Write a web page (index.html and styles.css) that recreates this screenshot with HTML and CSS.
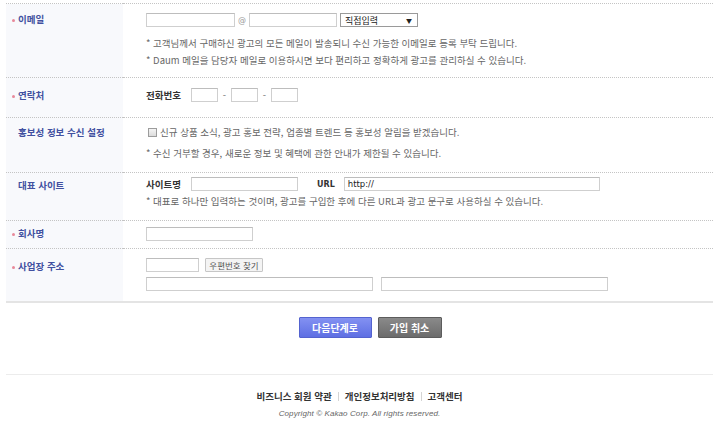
FILE: index.html
```html
<!DOCTYPE html>
<html lang="ko">
<head>
<meta charset="utf-8">
<title>회원가입</title>
<link rel="stylesheet" href="styles.css">
</head>
<body>
<div class="page">
  <table class="form">
    <tr class="row row-email">
      <th class="req">이메일</th>
      <td>
        <div class="fields">
          <span class="input w-email1"></span>
          <span class="at">@</span>
          <span class="input w-email2"></span>
          <span class="select"><span>직접입력</span><span class="arrow">▼</span></span>
        </div>
        <p class="note first">* 고객님께서 구매하신 광고의 모든 메일이 발송되니 수신 가능한 이메일로 등록 부탁 드립니다.</p>
        <p class="note">* Daum 메일을 담당자 메일로 이용하시면 보다 편리하고 정확하게 광고를 관리하실 수 있습니다.</p>
      </td>
    </tr>
    <tr class="row row-phone">
      <th class="req">연락처</th>
      <td>
        <div class="fields">
          <span class="flabel">전화번호</span>
          <span class="input w-phone"></span>
          <span class="dash">-</span>
          <span class="input w-phone"></span>
          <span class="dash">-</span>
          <span class="input w-phone"></span>
        </div>
      </td>
    </tr>
    <tr class="row row-promo">
      <th>홍보성 정보 수신 설정</th>
      <td>
        <label class="check"><span class="box"></span>신규 상품 소식, 광고 홍보 전략, 업종별 트렌드 등 홍보성 알림을 받겠습니다.</label>
        <p class="note gap">* 수신 거부할 경우, 새로운 정보 및 혜택에 관한 안내가 제한될 수 있습니다.</p>
      </td>
    </tr>
    <tr class="row row-site">
      <th>대표 사이트</th>
      <td>
        <div class="fields">
          <span class="flabel">사이트명</span>
          <span class="input w-site"></span>
          <span class="flabel url">URL</span>
          <span class="input w-url">http://</span>
        </div>
        <p class="note tight">* 대표로 하나만 입력하는 것이며, 광고를 구입한 후에 다른 URL과 광고 문구로 사용하실 수 있습니다.</p>
      </td>
    </tr>
    <tr class="row row-company">
      <th class="req">회사명</th>
      <td>
        <div class="fields">
          <span class="input w-company"></span>
        </div>
      </td>
    </tr>
    <tr class="row row-addr">
      <th class="req">사업장 주소</th>
      <td>
        <div class="fields">
          <span class="input w-zip"></span>
          <span class="zipbtn">우편번호 찾기</span>
        </div>
        <div class="fields second">
          <span class="input w-addr"></span>
          <span class="input w-addr"></span>
        </div>
      </td>
    </tr>
  </table>

  <div class="actions">
    <span class="btn btn-next">다음단계로</span>
    <span class="btn btn-cancel">가입 취소</span>
  </div>

  <div class="footer">
    <div class="links">
      <a>비즈니스 회원 약관</a><span class="sep"></span><a>개인정보처리방침</a><span class="sep"></span><a>고객센터</a>
    </div>
    <p class="copy">Copyright © Kakao Corp. All rights reserved.</p>
  </div>
</div>
</body>
</html>
```
FILE: styles.css
```css
* { box-sizing: border-box; }
html, body { margin: 0; padding: 0; background: #fff; }
body {
  font-family: "Noto Sans CJK KR", "Noto Sans", sans-serif;
  font-size: 9.5px;
  color: #555;
}
.page { padding: 3px 7px 0 6px; }

.form {
  width: 707px;
  border-collapse: collapse;
  table-layout: fixed;
}
.row { border-top: 1px dotted #c4c4c4; }
.row-addr { border-bottom: 2px solid #e4e4e4; }

.form th {
  width: 117px;
  padding: 0 0 0 12px;
  background: #f8f9fc;
  text-align: left;
  vertical-align: top;
  font-size: 9.5px;
  line-height: 14px;
  font-weight: bold;
  color: #4150a0;
  white-space: nowrap;
}
.form th.req::before {
  content: "";
  display: inline-block;
  width: 3px;
  height: 3px;
  border-radius: 50%;
  background: #e8899a;
  margin-left: -6px;
  margin-right: 3px;
  vertical-align: middle;
}
.form td {
  padding: 0 0 0 23px;
  vertical-align: top;
}

.row-email th { padding-top: 8px; }
.row-email td { padding-top: 9px; padding-bottom: 8px; }
.row-phone th { padding-top: 10px; }
.row-phone td { padding-top: 10px; padding-bottom: 15px; }
.row-promo th { padding-top: 7px; }
.row-promo td { padding-top: 6px; padding-bottom: 10px; }
.row-site th { padding-top: 5px; }
.row-site td { padding-top: 4px; padding-bottom: 10px; }
.row-company th { padding-top: 5px; }
.row-company td { padding-top: 6px; padding-bottom: 7px; }
.row-addr th { padding-top: 10px; }
.row-addr td { padding-top: 9px; padding-bottom: 10px; }

.fields {
  display: flex;
  align-items: center;
  height: 14px;
}
.fields.second { margin-top: 5px; gap: 8px; }

.input {
  display: inline-block;
  height: 14px;
  border: 1px solid #cfcfcf;
  border-top-color: #bdbdbd;
  background: #fff;
  padding: 0 3px;
  font-size: 8.5px;
  line-height: 12px;
  color: #222;
  font-family: "DejaVu Sans", sans-serif;
}
.w-email1 { width: 89px; }
.w-email2 { width: 88px; }
.w-phone { width: 27px; }
.w-site { width: 107px; }
.w-url { width: 256px; }
.w-company { width: 107px; }
.w-zip { width: 53px; }
.w-addr { width: 227px; }

.at { width: 14px; text-align: center; color: #999; font-size: 8px; font-family: "DejaVu Sans", sans-serif; }
.select {
  display: inline-flex;
  justify-content: space-between;
  align-items: center;
  width: 78px;
  height: 14px;
  margin-left: 3px;
  padding: 0 5px 0 4px;
  border: 1px solid #9a9a9a;
  background: #fff;
  color: #222;
  font-size: 9px;
}
.select .arrow { font-size: 6px; color: #222; }

.flabel { font-weight: bold; color: #333; font-size: 9.5px; width: 45px; flex: none; }
.flabel.url { width: auto; margin-left: 19px; margin-right: 9px; font-family: "DejaVu Sans", sans-serif; font-size: 8px; }
.dash { width: 13px; text-align: center; color: #777; }

.note {
  margin: 0;
  line-height: 17px;
  height: 17px;
  font-size: 9.5px;
  color: #666;
  white-space: nowrap;
}
.note.first { margin-top: 8px; }
.note.gap { margin-top: 4px; }
.note.tight { margin-top: 2px; }

.check {
  display: flex;
  align-items: center;
  height: 17px;
  line-height: 17px;
  color: #666;
  font-size: 9.5px;
  white-space: nowrap;
}
.check .box {
  display: inline-block;
  width: 9px;
  height: 9px;
  border: 1px solid #9c9c9c;
  background: linear-gradient(#f4f4f4, #dcdcdc);
  margin: 0 3px 0 2px;
}

.zipbtn {
  display: inline-flex;
  align-items: center;
  justify-content: center;
  width: 58px;
  height: 14px;
  margin-left: 6px;
  border: 1px solid #c6c6c6;
  background: #f4f4f4;
  font-size: 8.5px;
  color: #555;
  border-radius: 1px;
}

.actions {
  display: flex;
  justify-content: center;
  gap: 6px;
  padding-left: 21px;
  margin-top: 14px;
}
.btn {
  display: inline-flex;
  align-items: center;
  justify-content: center;
  height: 21px;
  font-size: 10px;
  font-weight: bold;
  color: #fff;
  border-radius: 1px;
}
.btn-next {
  width: 73px;
  background: linear-gradient(#8391f2, #5e6fe3);
  border: 1px solid #5463cf;
}
.btn-cancel {
  width: 64px;
  background: linear-gradient(#8a8a8a, #6c6c6c);
  border: 1px solid #5c5c5c;
}

.footer {
  margin-top: 36px;
  border-top: 1px solid #ececec;
  text-align: center;
  width: 707px;
}
.links {
  display: flex;
  justify-content: center;
  align-items: center;
  padding-top: 14px;
  line-height: 14px;
  font-size: 9.5px;
  font-weight: bold;
  color: #333;
}
.links a { color: #333; }
.sep {
  display: inline-block;
  width: 1px;
  height: 9px;
  background: #d4d4d4;
  margin: 0 6px;
}
.copy {
  margin: 4px 0 0;
  line-height: 14px;
  font-family: "Liberation Sans", sans-serif;
  font-style: italic;
  font-size: 8px;
  color: #666;
  letter-spacing: 0.1px;
}
```
